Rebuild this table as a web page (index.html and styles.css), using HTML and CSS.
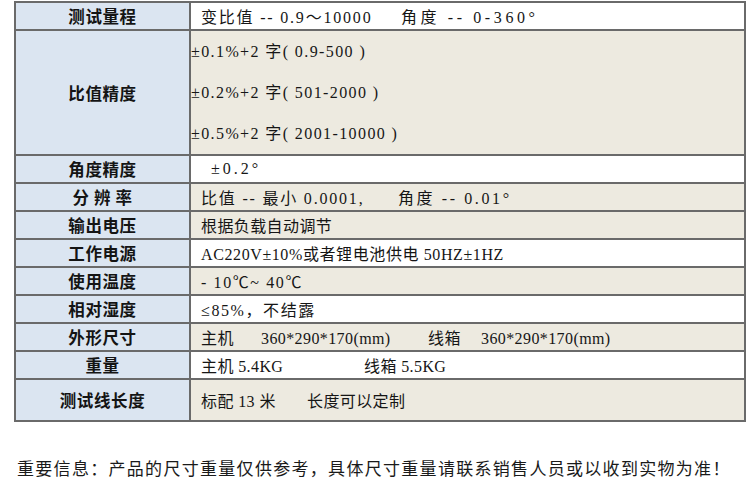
FILE: index.html
```html
<!DOCTYPE html>
<html lang="zh-CN">
<head>
<meta charset="utf-8">
<title>技术参数</title>
<link rel="stylesheet" href="styles.css">
</head>
<body>
<table class="spec">
  <colgroup><col class="c-label"><col class="c-value"></colgroup>
  <tr class="r"><th>测试量程</th><td class="white mono"><span class="part w200">变比值 -- 0.9～10000</span><span class="part wide">角度 -- 0-360°</span></td></tr>
  <tr class="r-tall"><th>比值精度</th><td class="beige lines mono"><div>±0.1%+2 字( 0.9-500 )</div><div>±0.2%+2 字( 501-2000 )</div><div>±0.5%+2 字( 2001-10000 )</div></td></tr>
  <tr class="r"><th>角度精度</th><td class="white mono-wide"><span class="indent">±0.2°</span></td></tr>
  <tr class="r"><th>分 辨 率</th><td class="beige mono"><span class="part w197">比值 -- 最小 0.0001,</span><span class="part wider">角度 -- 0.01°</span></td></tr>
  <tr class="r"><th>输出电压</th><td class="beige">根据负载自动调节</td></tr>
  <tr class="r"><th>工作电源</th><td class="white times">AC220V±10%或者锂电池供电 50HZ±1HZ</td></tr>
  <tr class="r"><th>使用温度</th><td class="beige times spaced">- 10℃~ 40℃</td></tr>
  <tr class="r"><th>相对湿度</th><td class="white times spaced">≤85%，不结露</td></tr>
  <tr class="r"><th>外形尺寸</th><td class="beige"><span class="part w60">主机</span><span class="part w167">360*290*170(mm)</span><span class="part w53">线箱</span><span class="part">360*290*170(mm)</span></td></tr>
  <tr class="r"><th>重量</th><td class="white"><span class="part w163">主机 5.4KG</span><span class="part">线箱 5.5KG</span></td></tr>
  <tr class="r-last"><th>测试线长度</th><td class="beige"><span class="part w106">标配 13 米</span><span class="part">长度可以定制</span></td></tr>
</table>
<p class="note">重要信息：产品的尺寸重量仅供参考，具体尺寸重量请联系销售人员或以收到实物为准！</p>
</body>
</html>
```
FILE: styles.css
```css
html, body {
  margin: 0;
  padding: 0;
  background: #ffffff;
}
body {
  width: 750px;
  height: 479px;
  overflow: hidden;
  font-family: "Liberation Serif", "Noto Sans CJK SC", serif;
  color: #161616;
}
.spec {
  margin: 1px 0 0 14px;
  width: 730px;
  border-collapse: collapse;
  table-layout: fixed;
  border: 2px solid #5e5e5e;
}
.c-label { width: 175px; }
.c-value { width: 555px; }
.spec th, .spec td {
  border: 2px solid #6a6a6a;
  padding: 0;
  vertical-align: middle;
}
.spec th {
  background: #dbe5f1;
  font-family: "Noto Sans CJK SC", sans-serif;
  font-weight: 700;
  font-size: 16.5px;
  letter-spacing: 0.6px;
  text-align: center;
  color: #141414;
}
.spec td {
  font-size: 16px;
  letter-spacing: 0.4px;
  padding-left: 10px;
  text-align: left;
  white-space: nowrap;
}
.r { height: 28px; }
.r-tall { height: 124px; }
.r-last { height: 42px; }
.white { background: #ffffff; }
.beige { background: #edeae0; }
.spec td.lines { padding-left: 0; letter-spacing: 1.4px; }
.lines div {
  line-height: 41px;
}
.spec td.mono { letter-spacing: 1.8px; }
.spec td.lines.mono { letter-spacing: 1.4px; }
.spec td.mono-wide { letter-spacing: 3px; }
.wide { letter-spacing: 3.6px; }
.wider { letter-spacing: 2.6px; }
.indent { padding-left: 10px; }
.spec td.times { font-size: 16px; letter-spacing: 0.6px; }
.spec td.times.spaced { letter-spacing: 1.6px; }
.part { display: inline-block; }
.w200 { width: 200px; }
.w197 { width: 197px; }
.w60 { width: 60px; }
.w167 { width: 167px; }
.w53 { width: 53px; }
.w163 { width: 163px; }
.w106 { width: 106px; }
.note {
  margin: 33px 0 0 17px;
  font-family: "Liberation Serif", "Noto Sans CJK SC", serif;
  font-size: 17px;
  letter-spacing: 1.3px;
  color: #1a1a1a;
  white-space: nowrap;
}
```
